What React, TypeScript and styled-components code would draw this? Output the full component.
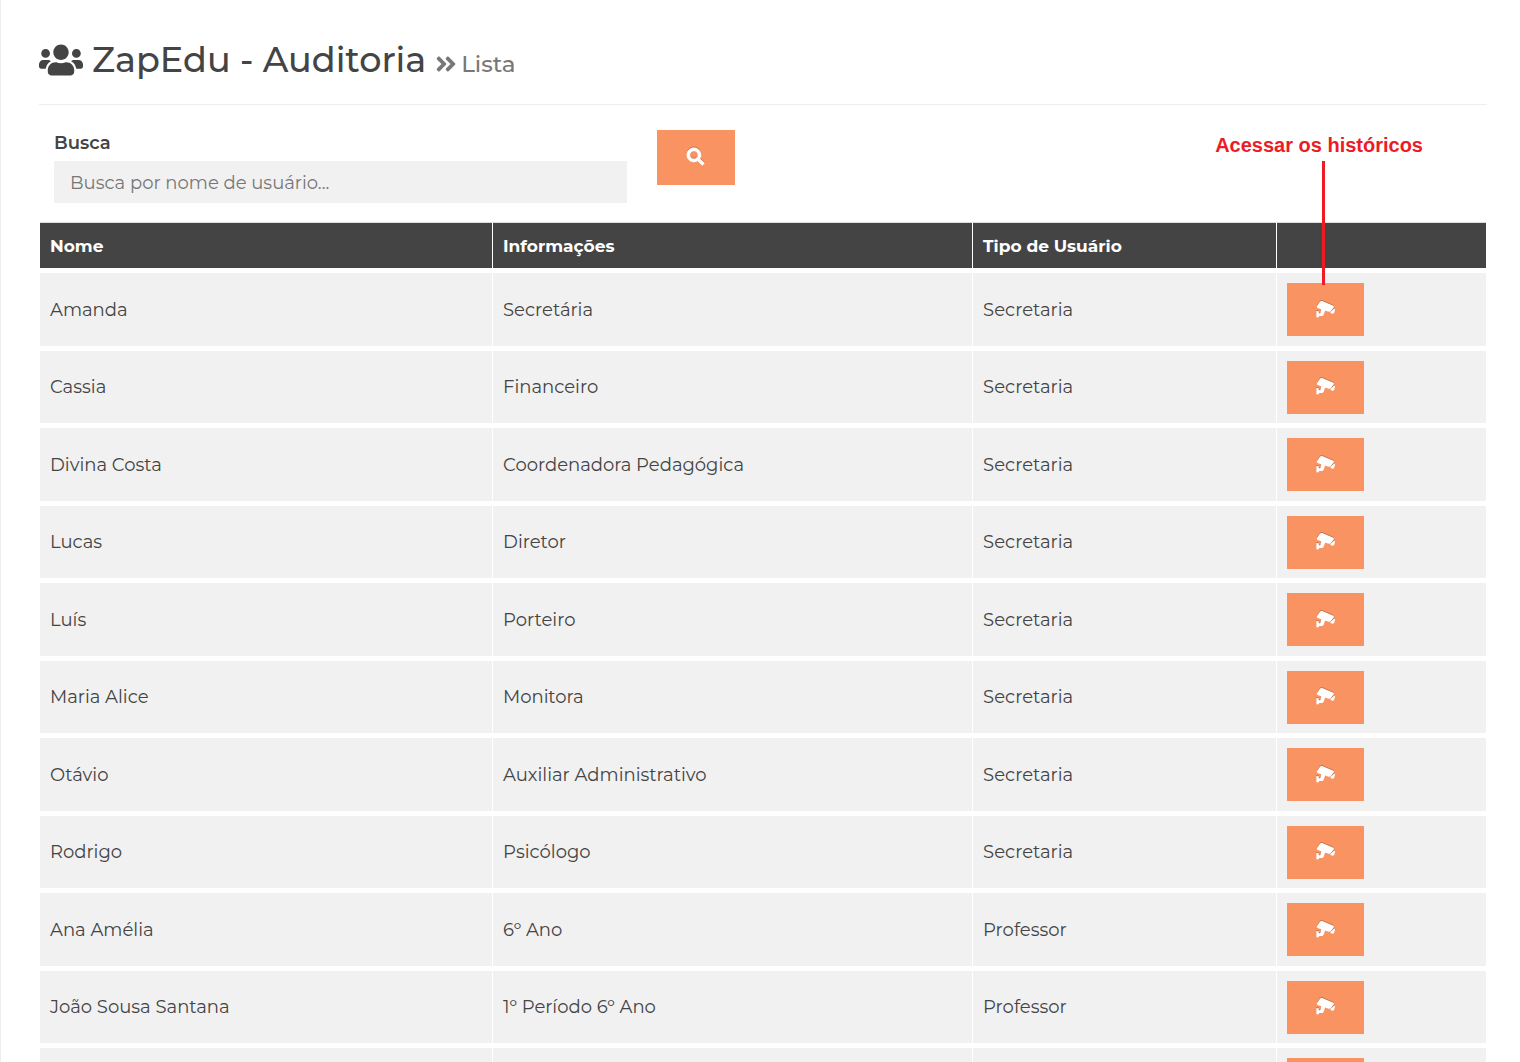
import React from "react";
import styled, { createGlobalStyle } from "styled-components";
import { FaAngleDoubleRight, FaSearch, FaUsers } from "react-icons/fa";

const GlobalStyle = createGlobalStyle`
  *, *::before, *::after { box-sizing: border-box; }
  body {
    margin: 0;
    background: #fff;
    color: #444;
    font-family: Montserrat, Inter, "Open Sans", sans-serif;
    font-size: 18px;
    line-height: 24px;
  }
`;

const Page = styled.main`
  height: 100vh;
  overflow: hidden;
  padding: 32px 33px 0 38px;
  border-left: 1px solid #eee;
`;

const PageHeader = styled.header`
  display: flex;
  align-items: center;
  height: 73px;
  padding-bottom: 17px;
  border-bottom: 1px solid #eee;
`;

const Title = styled.h1`
  display: flex;
  align-items: center;
  gap: 9px;
  margin: 0;
  font-size: 35px;
  line-height: 48px;
  font-weight: 500;
  white-space: nowrap;
`;

const TitleText = styled.span`
  display: flex;
  align-items: baseline;
  gap: 8px;
`;

const Subtitle = styled.small`
  color: #777;
  font-size: 23px;
  line-height: 28px;

  svg {
    margin-right: 3px;
    vertical-align: -4px;
  }
`;

const SearchForm = styled.form`
  position: relative;
  display: flex;
  align-items: flex-start;
  gap: 30px;
  padding: 25px 15px 19px;
`;

const Field = styled.div`
  display: flex;
  flex-direction: column;
  gap: 6px;
  width: 40.4%;
`;

const Label = styled.label`
  padding-top: 1px;
  font-weight: 600;
`;

const SearchInput = styled.input`
  width: 100%;
  height: 42px;
  padding: 2px 16px 0;
  border: 0;
  border-radius: 0;
  background: #f1f1f1;
  color: #444;
  font: inherit;

  &::placeholder {
    color: #777;
    opacity: 1;
  }
`;

const OrangeButton = styled.button<{ $width: number; $height: number }>`
  display: flex;
  align-items: center;
  justify-content: center;
  width: ${(p) => p.$width}px;
  height: ${(p) => p.$height}px;
  padding: 0 0 2px;
  border: 0;
  background: #f99462;
  color: #fff;
  cursor: pointer;

  svg {
    overflow: visible;
    filter: drop-shadow(0 -1px 0 rgba(0, 0, 0, 0.2));
  }
`;

const SearchIcon = styled(FaSearch)`
  stroke: currentColor;
  stroke-width: 28px;
`;

const Callout = styled.div`
  position: absolute;
  top: 28px;
  right: 64px;
  color: #ed1c24;
  font: bold 20px/24px "Liberation Sans", Arial, sans-serif;
  white-space: nowrap;
  pointer-events: none;

  &::after {
    content: "";
    position: absolute;
    top: 28px;
    right: 98px;
    width: 3px;
    height: 124px;
    background: #ed1c24;
  }
`;

const Table = styled.table`
  width: calc(100% - 2px);
  margin: 0 1px;
  border-collapse: separate;
  border-spacing: 0;
  table-layout: fixed;
`;

const Column = styled.col<{ $share: number }>`
  width: ${(p) => p.$share}%;
`;

const HeadCell = styled.th`
  height: 51px;
  padding: 0 10px;
  border-top: 1px solid #ddd;
  border-right: 1px solid #fff;
  border-bottom: 5px solid #fff;
  background: #444;
  color: #fff;
  font-size: 17px;
  font-weight: 700;
  text-align: left;

  &:last-child { border-right: 0; }
`;

const Row = styled.tr`
  height: 78px;

  &:nth-child(even) { height: 77px; }
`;

const Cell = styled.td`
  padding: 0 10px;
  border-right: 1px solid #fff;
  border-bottom: 5px solid #fff;
  background: #f1f1f1;
  vertical-align: middle;

  &:last-child { border-right: 0; }
`;

const CameraIcon = () => (
  <svg width="20" height="18" viewBox="0 0 60 54" fill="currentColor" aria-hidden="true">
    <path d="M12 5Q14 2 18 3L52 17Q55 19 53 22L44 34Q42 36 38 35L5 24Q1 22 3 18Z" />
    <path d="M44 35L56 25L57 30L54 40L49 41L43 38Z" />
    <path d="M16 26L28 30L23 44Q21 48 17 48H9V52H1V33L8 34V40H13Z" />
  </svg>
);

type User = { name: string; info: string; type: string };

const users: User[] = [
  { name: "Amanda", info: "Secretária", type: "Secretaria" },
  { name: "Cassia", info: "Financeiro", type: "Secretaria" },
  { name: "Divina Costa", info: "Coordenadora Pedagógica", type: "Secretaria" },
  { name: "Lucas", info: "Diretor", type: "Secretaria" },
  { name: "Luís", info: "Porteiro", type: "Secretaria" },
  { name: "Maria Alice", info: "Monitora", type: "Secretaria" },
  { name: "Otávio", info: "Auxiliar Administrativo", type: "Secretaria" },
  { name: "Rodrigo", info: "Psicólogo", type: "Secretaria" },
  { name: "Ana Amélia", info: "6º Ano", type: "Professor" },
  { name: "João Sousa Santana", info: "1º Período 6º Ano", type: "Professor" },
  { name: "", info: "", type: "" },
];

export default function App() {
  return (
    <>
      <GlobalStyle />
      <Page>
        <PageHeader>
          <Title>
            <FaUsers size={44} />
            <TitleText>
              ZapEdu - Auditoria
              <Subtitle>
                <FaAngleDoubleRight size={24} />
                Lista
              </Subtitle>
            </TitleText>
          </Title>
        </PageHeader>

        <SearchForm onSubmit={(e) => e.preventDefault()}>
          <Field>
            <Label htmlFor="busca">Busca</Label>
            <SearchInput id="busca" type="text" placeholder="Busca por nome de usuário..." />
          </Field>
          <OrangeButton type="submit" $width={78} $height={55} aria-label="Buscar">
            <SearchIcon size={17} />
          </OrangeButton>
          <Callout>Acessar os históricos</Callout>
        </SearchForm>

        <Table>
          <colgroup>
            <Column $share={31.33} />
            <Column $share={33.2} />
            <Column $share={21.02} />
            <Column $share={14.45} />
          </colgroup>
          <thead>
            <tr>
              <HeadCell scope="col">Nome</HeadCell>
              <HeadCell scope="col">Informações</HeadCell>
              <HeadCell scope="col">Tipo de Usuário</HeadCell>
              <HeadCell />
            </tr>
          </thead>
          <tbody>
            {users.map((user, i) => (
              <Row key={i}>
                <Cell>{user.name}</Cell>
                <Cell>{user.info}</Cell>
                <Cell>{user.type}</Cell>
                <Cell>
                  <OrangeButton type="button" $width={77} $height={53} aria-label="Acessar histórico">
                    <CameraIcon />
                  </OrangeButton>
                </Cell>
              </Row>
            ))}
          </tbody>
        </Table>
      </Page>
    </>
  );
}
